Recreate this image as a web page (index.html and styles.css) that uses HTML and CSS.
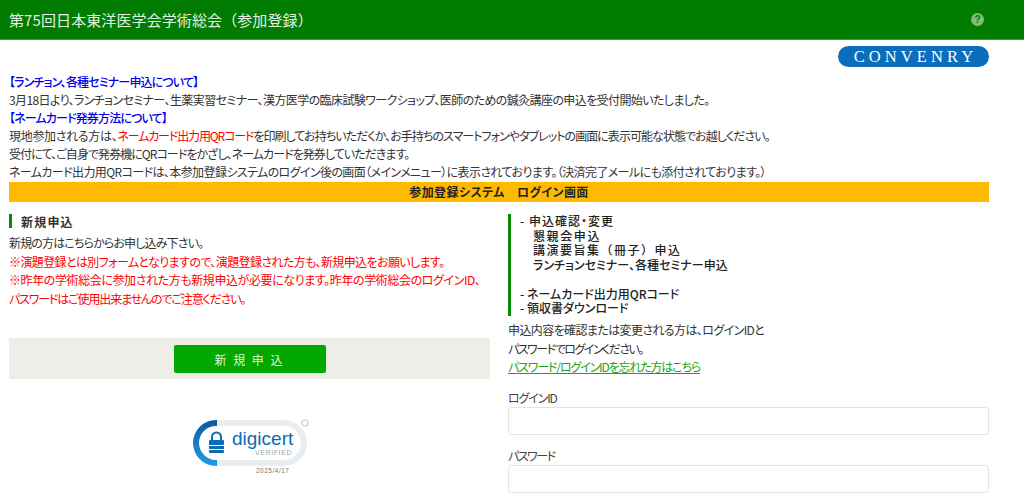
FILE: index.html
```html
<!DOCTYPE html>
<html lang="ja">
<head>
    <meta charset="utf-8">
    <title>第75回日本東洋医学会学術総会（参加登録）</title>
    <link rel="stylesheet" href="styles.css">
</head>
<body>
    <header class="topbar">
        <h1>第75回日本東洋医学会学術総会（参加登録）</h1>
        <span class="help">?</span>
    </header>
    <div class="page">
        <div class="logoRow"><span class="logo">CONVENRY</span></div>
        <div class="notice">
            <div class="blue k3">【ランチョン、各種セミナー申込について】</div>
            <div class="k2">3月18日より、ランチョンセミナー、生薬実習セミナー、漢方医学の臨床試験ワークショップ、医師のための鍼灸講座の申込を受付開始いたしました。</div>
            <div class="blue k3">【ネームカード発券方法について】</div>
            <div class="k3b"><span class="k0">現地参加される方は、</span><span class="red k4">ネームカード出力用QRコード</span>を印刷してお持ちいただくか、お手持ちのスマートフォンやタブレットの画面に表示可能な状態でお越しください。</div>
            <div class="k3b">受付にて、ご自身で発券機にQRコードをかざし、ネームカードを発券していただきます。</div>
            <div class="k2">ネームカード出力用QRコードは、本参加登録システムのログイン後の画面（メインメニュー）に表示されております。（決済完了メールにも添付されております。）</div>
        </div>
        <div class="titleBar">参加登録システム　ログイン画面</div>
        <div class="columns">
            <div class="col">
                <h2 class="sectionHead">新規申込</h2>
                <p class="body k3">新規の方はこちらからお申し込み下さい。</p>
                <p class="body red k2">※演題登録とは別フォームとなりますので、演題登録された方も、新規申込をお願いします。</p>
                <p class="body red k1">※昨年の学術総会に参加された方も新規申込が必要になります。昨年の学術総会のログインID、</p>
                <p class="body red k4">パスワードはご使用出来ませんのでご注意ください。</p>
                <div class="buttonBox"><button class="newBtn">新 規 申 込</button></div>
                <svg class="seal" width="120" height="56" viewBox="0 0 120 56">
                    <defs>
                        <linearGradient id="arc" x1="0" y1="0" x2="0" y2="1">
                            <stop offset="0" stop-color="#0a5c9e"/>
                            <stop offset="1" stop-color="#1e9be8"/>
                        </linearGradient>
                    </defs>
                    <path d="M27 4h67a20 20 0 0 1 0 40H27" fill="none" stroke="#e8edf0" stroke-width="6"/>
                    <path d="M27 1h-1a23 23 0 0 0 0 46h1v-6h-1a17 17 0 0 1 0-34h1z" fill="url(#arc)"/>
                    <path d="M22 21v-3a4.500 4.500 0 0 1 9 0v3" fill="none" stroke="#0a6cb4" stroke-width="2"/>
                    <rect x="19" y="21" width="15" height="5" rx="1" fill="#0a6cb4"/>
                    <rect x="19" y="27" width="15" height="3" fill="#0a6cb4"/>
                    <rect x="19" y="31" width="15" height="3" rx="1" fill="#0a6cb4"/>
                    <text x="42" y="26" class="sealName">digicert</text>
                    <text x="65" y="36" class="sealSub">VERIFIED</text>
                    <circle cx="115" cy="4" r="3.200" fill="none" stroke="#aaa" stroke-width=".7"/>
                    <text x="66" y="54" class="sealDate">2025/4/17</text>
                </svg>
            </div>
            <div class="col">
                <div class="menuList">
                    <div>- 申込確認・変更</div>
                    <div class="indent kanji">懇親会申込</div>
                    <div class="indent kanji fullParen">講演要旨集（冊子）申込</div>
                    <div class="indent kana">ランチョンセミナー、各種セミナー申込</div>
                    <div>&nbsp;</div>
                    <div class="kana">- ネームカード出力用QRコード</div>
                    <div class="kana">- 領収書ダウンロード</div>
                </div>
                <p class="body loginText k2">申込内容を確認または変更される方は、ログインIDと</p>
                <p class="body k5">パスワードでログインください。</p>
                <p class="body k4"><a class="forgotLink" href="#">パスワード/ログインIDを忘れた方はこちら</a></p>
                <label class="fieldLabel k4" for="loginId">ログインID</label>
                <input class="field" type="text" id="loginId">
                <label class="fieldLabel k5" for="password">パスワード</label>
                <input class="field" type="password" id="password">
            </div>
        </div>
    </div>
</body>
</html>
```

FILE: styles.css
```css
html, body {
  margin: 0;
  height: 498px;
  overflow: hidden;
}
body {
  font-family: "Noto Sans CJK JP", "Noto Sans", sans-serif;
  font-size: 12px;
  font-feature-settings: "palt";
  line-height: 18px;
  color: #333;
  background: #fff;
}
/* the reference font has narrow kana, so lines are tightened by how much kana they hold */
.k0 { letter-spacing: -0.300px; }
.k1 { letter-spacing: -0.400px; }
.k2 { letter-spacing: -0.600px; }
.k3 { letter-spacing: -0.850px; }
.k3b { letter-spacing: -0.950px; }
.k4 { letter-spacing: -1.150px; }
.k5 { letter-spacing: -1.500px; }

.topbar {
  height: 39px;
  background: #007c00;
  border-bottom: 1px solid #3a9a3a;
  display: flex;
  align-items: center;
  justify-content: space-between;
  padding: 0 40px 0 9px;
}
.topbar h1 {
  margin: 0;
  font-size: 15px;
  font-weight: 400;
  font-feature-settings: normal;
  letter-spacing: .1px;
  color: #e6f2e6;
}
.help {
  width: 13px;
  height: 13px;
  border-radius: 50%;
  background: #7fbd7f;
  color: #007c00;
  font-size: 10px;
  font-weight: 700;
  line-height: 13px;
  text-align: center;
  font-family: "Liberation Sans", sans-serif;
}
.page {
  padding: 0 35px 0 9px;
}
.logoRow {
  display: flex;
  justify-content: flex-end;
  padding-top: 6px;
  height: 27px;
}
.logo {
  width: 151px;
  height: 21px;
  padding-left: 4px;
  box-sizing: border-box;
  border-radius: 11px;
  background: #0a6ebd;
  color: #fff;
  font-family: "Liberation Serif", serif;
  font-size: 16.500px;
  line-height: 21px;
  letter-spacing: 4.100px;
  text-align: center;
}
.notice {
  white-space: nowrap;
}
.blue {
  color: #0000ee;
  font-weight: 500;
}
.red {
  color: #f00;
}
.titleBar {
  height: 20px;
  margin-top: 1px;
  background: #ffba00;
  color: #222;
  font-weight: 700;
  line-height: 20px;
  text-align: center;
  letter-spacing: .4px;
}
.columns {
  display: flex;
  gap: 18px;
  padding-top: 12px;
}
.col {
  width: 481px;
  flex: none;
}
.sectionHead {
  margin: 0 0 6px;
  padding-left: 9px;
  height: 14px;
  border-left: 3px solid #0a8a0a;
  font-size: 12px;
  font-weight: 700;
  line-height: 15px;
  letter-spacing: 1.200px;
  color: #333;
}
.body {
  margin: 0;
  white-space: nowrap;
  line-height: 18.500px;
}
.buttonBox {
  margin-top: 30px;
  height: 41px;
  background: #eeeee9;
  display: flex;
  justify-content: center;
  padding-top: 7px;
  box-sizing: border-box;
}
.newBtn {
  width: 152px;
  height: 28px;
  border: 0;
  border-radius: 2px;
  background: #00a800;
  color: #dff3df;
  font: 12px "Noto Sans CJK JP", sans-serif;
  letter-spacing: 2px;
}
.seal {
  display: block;
  margin: 40px auto 0;
}
.sealName {
  font-family: "Liberation Sans", sans-serif;
  font-size: 19px;
  fill: #0a6cb4;
}
.sealSub {
  font-family: "Liberation Sans", sans-serif;
  font-size: 7px;
  letter-spacing: .6px;
  fill: #9aa5ad;
}
.sealDate {
  font-family: "Liberation Sans", sans-serif;
  font-size: 6.500px;
  letter-spacing: .5px;
  fill: #777;
}
.menuList {
  height: 102px;
  border-left: 3px solid #0a8a0a;
  padding-left: 9px;
  font-weight: 500;
  line-height: 14.500px;
  letter-spacing: 1px;
  color: #222;
}
.indent {
  padding-left: 13px;
}
.kanji {
  letter-spacing: 1.600px;
}
.fullParen {
  font-feature-settings: normal;
  letter-spacing: 1.500px;
}
.kana {
  letter-spacing: 0;
}
.loginText {
  margin-top: 5px;
}
.forgotLink {
  color: #18a418;
}
.fieldLabel {
  display: block;
  margin-top: 12px;
  color: #444;
}
.field {
  display: block;
  width: 100%;
  height: 28px;
  box-sizing: border-box;
  border: 1px solid #e4e4e4;
  border-radius: 3px;
  background: #fff;
}
```
